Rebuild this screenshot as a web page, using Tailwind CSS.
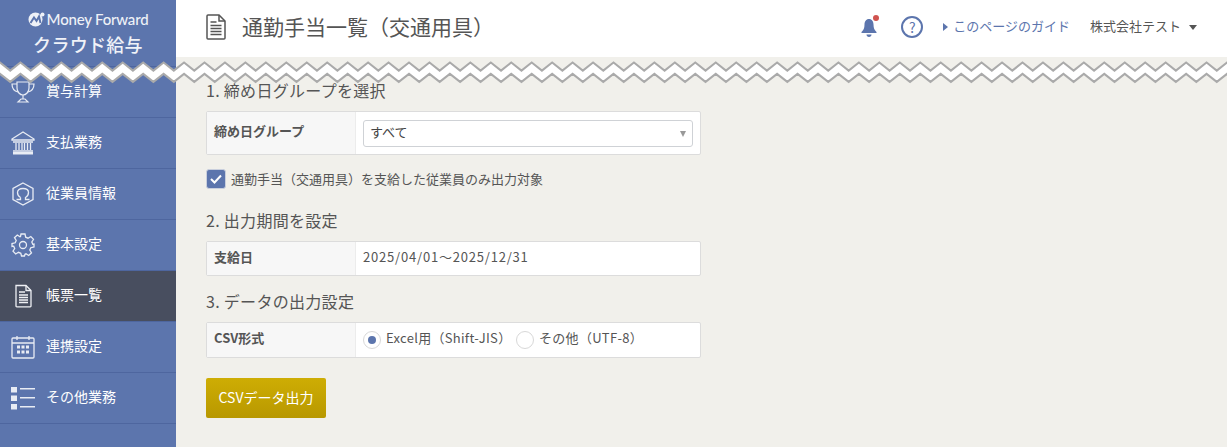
<!DOCTYPE html>
<html lang="ja"><head><meta charset="utf-8">
<script src="https://cdn.jsdelivr.net/npm/@tailwindcss/browser@4"></script>
</head>
<body class="m-0 w-[1227px] h-[447px] overflow-hidden bg-[#f1f0eb] font-['Noto_Sans_CJK_JP','Noto_Sans',sans-serif] text-[#555]">
<div class="relative flex h-[447px]">
  <aside class="w-[176px] shrink-0 bg-[#5c75ad] text-white flex flex-col">
    <div class="h-[67px] flex flex-col items-center pt-[10px] border-b border-[#4e669f]">
      <div class="flex items-center gap-[2px] h-[18px] text-[14px] leading-[18px] font-medium text-[#eef1f7]">
        <svg width="17" height="15" viewBox="0 0 17 15"><circle cx="7.500" cy="7.500" r="7" fill="#eef1f7"/><path d="M2.500 11 L6 5.500 L8.500 9 L11 4.500 L12.500 11" fill="none" stroke="#5c75ad" stroke-width="2"/><circle cx="14.500" cy="2.500" r="2" fill="#eef1f7"/></svg>
        <span class="font-['Lato','Noto_Sans',sans-serif] text-[15px] tracking-[-0.2px] whitespace-nowrap">Money Forward</span>
      </div>
      <div class="mt-[3px] text-[18px] leading-[26px] font-medium text-[#f0f2f8] tracking-[0.3px]">クラウド給与</div>
    </div>
    <nav class="flex flex-col text-[14px] leading-[20px]">
      <a class="h-[51px] flex items-center gap-[11px] pl-[11px] border-b border-[#4e669f]">
        <svg class="w-[24px] h-[24px] shrink-0" viewBox="0 0 24 24" fill="none" stroke="#e8ecf4" stroke-width="1.200"><path d="M6 2h12v6c0 4-3 7-6 7s-6-3-6-7z"/><path d="M6 4H1c0 5 2 7 6 8M18 4h5c0 5-2 7-6 8"/><path d="M12 15v4M7 22l3-3h4l3 3z"/></svg>
        <span class="pb-[5px]">賞与計算</span>
      </a>
      <a class="h-[51px] flex items-center gap-[11px] pl-[11px] border-b border-[#4e669f]">
        <svg class="w-[24px] h-[24px] shrink-0" viewBox="0 0 24 24" fill="none" stroke="#e8ecf4" stroke-width="1.300"><path d="M1 8 12 1l11 7v1H1z"/><path d="M2 11h20M5 12v7M8 12v7M11 12v7M13.500 12v7M16.500 12v7M19.500 12v7M2 20h20"/><rect x="2" y="21" width="20" height="2.500" fill="#e8ecf4" stroke="none"/></svg>
        <span class="pb-[5px]">支払業務</span>
      </a>
      <a class="h-[51px] flex items-center gap-[11px] pl-[11px] border-b border-[#4e669f]">
        <svg class="w-[24px] h-[24px] shrink-0" viewBox="0 0 24 24" fill="none" stroke="#e8ecf4" stroke-width="1.300"><path d="M12 1l10 5.500v11L12 23 2 17.500v-11z"/><path d="M9.500 15.500c-2-1-3-3-3-5C6.500 8 8.500 6.500 12 6.500s5.500 1.500 5.500 4c0 2-1 4-3 5v2h4M9.500 15.500v2h-4"/></svg>
        <span class="pb-[5px]">従業員情報</span>
      </a>
      <a class="h-[51px] flex items-center gap-[11px] pl-[11px] border-b border-[#4e669f]">
        <svg class="w-[24px] h-[24px] shrink-0" viewBox="0 0 24 24" fill="none" stroke="#e8ecf4" stroke-width="1.300"><circle cx="12" cy="12" r="3.500"/><path d="M10 1h4l.7 3.200 2.300 1 2.800-1.700 2.700 2.800-1.700 2.700 1 2.300L23 11v3l-3.200.7-1 2.300 1.700 2.800-2.800 2.700-2.700-1.700-1 .5L13.500 23h-3l-.7-2.700-2.300-1-2.800 1.700-2.700-2.800 1.700-2.700-1-2.300L1 13.500v-3l3.200-.7 1-2.300L3.500 4.700l2.800-2.700L9 3.700l.5-.2z"/></svg>
        <span class="pb-[5px]">基本設定</span>
      </a>
      <a class="h-[51px] flex items-center gap-[11px] pl-[11px] bg-[#484e5f] border-b border-[#4e669f]">
        <svg class="w-[24px] h-[24px] shrink-0" viewBox="0 0 24 24" fill="none" stroke="#eef0f4" stroke-width="1.300"><path d="M5 1.500h10l5 5V22a.8.8 0 0 1-.8.8H5.800A.8.8 0 0 1 5 22z"/><path d="M15 1.500v5h5"/><path d="M8 8h6M8 11h9M8 13.500h9M8 16h9M8 18.500h9" stroke-width="1.400"/></svg>
        <span class="pb-[5px]">帳票一覧</span>
      </a>
      <a class="h-[51px] flex items-center gap-[11px] pl-[11px] border-b border-[#4e669f]">
        <svg class="w-[24px] h-[24px] shrink-0" viewBox="0 0 24 24" fill="none" stroke="#e8ecf4" stroke-width="1.300"><rect x="1" y="3" width="22" height="20" rx="1"/><path d="M1 8h22M6 1v4M18 1v4"/><g fill="#e8ecf4" stroke="none"><rect x="6" y="10.500" width="3" height="3"/><rect x="10.500" y="10.500" width="3" height="3"/><rect x="15" y="10.500" width="3" height="3"/><rect x="6" y="15.500" width="3" height="3"/><rect x="10.500" y="15.500" width="3" height="3"/><rect x="15" y="15.500" width="3" height="3"/></g></svg>
        <span class="pb-[5px]">連携設定</span>
      </a>
      <a class="h-[51px] flex items-center gap-[11px] pl-[11px] border-b border-[#4e669f]">
        <svg class="w-[24px] h-[24px] shrink-0" viewBox="0 0 24 24" fill="#e8ecf4"><rect x="0" y="1" width="6" height="5.500"/><rect x="0" y="9.500" width="6" height="5.500"/><rect x="0" y="18" width="6" height="5.500"/><rect x="9" y="2" width="15" height="1.500"/><rect x="9" y="11" width="15" height="1.500"/><rect x="9" y="20" width="15" height="1.500"/></svg>
        <span class="pb-[5px]">その他業務</span>
      </a>
    </nav>
  </aside>
  <div class="flex-1 flex flex-col min-w-0">
    <header class="h-[57px] bg-white flex items-center pl-[30px] pr-[30px] pb-[3px] shrink-0">
      <svg class="w-[20px] h-[26px]" viewBox="0 0 20 26" fill="none" stroke="#555" stroke-width="1.500"><path d="M2 1h11l6 6v17a1 1 0 0 1-1 1H2a1 1 0 0 1-1-1V2a1 1 0 0 1 1-1z"/><path d="M13 1v6h6"/><path d="M4.500 8h6M4.500 11.500h11M4.500 14.500h11M4.500 17.500h11M4.500 20.500h11" stroke-width="1.300"/></svg>
      <h1 class="ml-[16px] pb-[3px] text-[21px] leading-[28px] font-normal text-[#555]">通勤手当一覧（交通用具）</h1>
      <div class="ml-auto flex items-center text-[13px]">
        <span class="relative w-[18px] h-[22px] block">
          <svg class="w-[18px] h-[20px] mt-[1px]" viewBox="0 0 18 20" fill="#5c75ad"><path d="M9 2c3 0 4.500 2.500 4.500 5.500 0 4 1 5.500 3 7.500v1H1.500v-1c2-2 3-3.500 3-7.500C4.500 4.500 6 2 9 2z"/><path d="M6.500 17.500h5c0 1.500-1 2.500-2.500 2.500s-2.500-1-2.500-2.500z"/></svg>
          <span class="absolute -top-[1px] -right-[1px] w-[6px] h-[6px] rounded-full bg-[#d0534f]"></span>
        </span>
        <span class="ml-[23px] w-[22px] h-[22px] rounded-full border-2 border-[#5c75ad] text-[#5c75ad] flex items-center justify-center text-[14px] leading-none">?</span>
        <span class="ml-[20px] w-0 h-0 border-y-[4px] border-y-transparent border-l-[5px] border-l-[#5c75ad]"></span>
        <a class="ml-[5px] pb-[2px] text-[#5c75ad] leading-[20px]">このページのガイド</a>
        <span class="ml-[20px] pb-[2px] leading-[20px]">株式会社テスト</span>
        <span class="ml-[8px] w-0 h-0 border-x-[4px] border-x-transparent border-t-[5px] border-t-[#555]"></span>
      </div>
    </header>
    <main class="pl-[30px] pt-[23px] w-[525px]">
      <h2 class="text-[16px] leading-[20px] font-normal tracking-[0.3px]">1. 締め日グループを選択</h2>
      <div class="mt-[11px] flex h-[44px] bg-white border border-[#dcdcdc] rounded-[2px]">
        <div class="w-[149px] bg-[#f7f7f7] border-r border-[#ececec] pl-[7px] flex items-center text-[13px] font-bold"><span class="pb-[4px]">締め日グループ</span></div>
        <div class="flex-1 px-[7px] flex items-center">
          <div class="relative w-full h-[27px] border border-[#cfd2d6] rounded-[3px] flex items-center pl-[6px] text-[13px] text-[#444]"><span class="pb-[2px]">すべて</span>
            <span class="absolute right-[6px] top-[10px] w-0 h-0 border-x-[3.500px] border-x-transparent border-t-[6px] border-t-[#999]"></span>
          </div>
        </div>
      </div>
      <label class="mt-[14px] flex items-center text-[13px] leading-[20px]">
        <span class="w-[20px] h-[20px] rounded-[3px] bg-[#5c75ad] border border-[#c9cfdd] flex items-center justify-center">
          <svg width="12" height="10" viewBox="0 0 12 10" fill="none" stroke="#fff" stroke-width="2"><path d="M1 5l3.500 3.500L11 1.500"/></svg>
        </span>
        <span class="ml-[5px]">通勤手当（交通用具）を支給した従業員のみ出力対象</span>
      </label>
      <h2 class="mt-[21px] text-[16px] leading-[20px] font-normal tracking-[0.3px]">2. 出力期間を設定</h2>
      <div class="mt-[11px] flex h-[35px] bg-white border border-[#dcdcdc] rounded-[2px] text-[13px]">
        <div class="w-[149px] bg-[#f7f7f7] border-r border-[#ececec] pl-[7px] flex items-center font-bold"><span class="pb-[4px]">支給日</span></div>
        <div class="flex-1 px-[7px] flex items-center tracking-[0.8px]"><span class="pb-[4px]">2025/04/01～2025/12/31</span></div>
      </div>
      <h2 class="mt-[15px] text-[16px] leading-[20px] font-normal tracking-[0.3px]">3. データの出力設定</h2>
      <div class="mt-[11px] flex h-[36px] bg-white border border-[#dcdcdc] rounded-[2px] text-[13px]">
        <div class="w-[149px] bg-[#f7f7f7] border-r border-[#ececec] pl-[7px] flex items-center font-bold"><span class="pb-[4px]">CSV形式</span></div>
        <div class="flex-1 pl-[7px] flex items-center">
          <span class="w-[18px] h-[18px] rounded-full border border-[#d8d8d8] flex items-center justify-center"><span class="w-[8px] h-[8px] rounded-full bg-[#5c75ad]"></span></span>
          <span class="ml-[5px] pb-[4px] w-[130px] tracking-[0.3px] whitespace-nowrap">Excel用（Shift-JIS）</span>
          <span class="w-[18px] h-[18px] rounded-full border border-[#d8d8d8]"></span>
          <span class="ml-[5px] pb-[4px] tracking-[0.3px]">その他（UTF-8）</span>
        </div>
      </div>
      <button class="mt-[20px] w-[120px] h-[40px] rounded-[2px] bg-gradient-to-b from-[#cead04] to-[#b89800] text-white text-[14px] pb-[2px]">CSVデータ出力</button>
    </main>
  </div>
  <svg class="absolute left-0 top-0 pointer-events-none" width="1227" height="90" viewBox="0 0 1227 90">
    <path transform="translate(0 -5.750) scale(1 1.0833)" fill="#fff" stroke="#aaa" stroke-width="2" d="M-20.450 63
      l10.225 7.500 10.225-7.500 10.225 7.500 10.225-7.500 10.225 7.500 10.225-7.500 10.225 7.500 10.225-7.500 10.225 7.500 10.225-7.500 10.225 7.500 10.225-7.500 10.225 7.500 10.225-7.500 10.225 7.500 10.225-7.500 10.225 7.500 10.225-7.500 10.225 7.500 10.225-7.500
      l10.225 7.500 10.225-7.500 10.225 7.500 10.225-7.500 10.225 7.500 10.225-7.500 10.225 7.500 10.225-7.500 10.225 7.500 10.225-7.500 10.225 7.500 10.225-7.500 10.225 7.500 10.225-7.500 10.225 7.500 10.225-7.500 10.225 7.500 10.225-7.500 10.225 7.500 10.225-7.500
      l10.225 7.500 10.225-7.500 10.225 7.500 10.225-7.500 10.225 7.500 10.225-7.500 10.225 7.500 10.225-7.500 10.225 7.500 10.225-7.500 10.225 7.500 10.225-7.500 10.225 7.500 10.225-7.500 10.225 7.500 10.225-7.500 10.225 7.500 10.225-7.500 10.225 7.500 10.225-7.500
      l10.225 7.500 10.225-7.500 10.225 7.500 10.225-7.500 10.225 7.500 10.225-7.500 10.225 7.500 10.225-7.500 10.225 7.500 10.225-7.500 10.225 7.500 10.225-7.500 10.225 7.500 10.225-7.500 10.225 7.500 10.225-7.500 10.225 7.500 10.225-7.500 10.225 7.500 10.225-7.500
      l10.225 7.500 10.225-7.500 10.225 7.500 10.225-7.500 10.225 7.500 10.225-7.500 10.225 7.500 10.225-7.500 10.225 7.500 10.225-7.500 10.225 7.500 10.225-7.500 10.225 7.500 10.225-7.500 10.225 7.500 10.225-7.500 10.225 7.500 10.225-7.500 10.225 7.500 10.225-7.500
      l10.225 7.500 10.225-7.500 10.225 7.500 10.225-7.500 10.225 7.500 10.225-7.500 10.225 7.500 10.225-7.500 10.225 7.500 10.225-7.500 10.225 7.500 10.225-7.500 10.225 7.500 10.225-7.500 10.225 7.500 10.225-7.500 10.225 7.500 10.225-7.500 10.225 7.500 10.225-7.500
      l10.225 7.500 10.225-7.500 10.225 7.500 10.225-7.500
      v10.500
      l-10.225 7.500 -10.225-7.500 -10.225 7.500 -10.225-7.500 -10.225 7.500 -10.225-7.500 -10.225 7.500 -10.225-7.500 -10.225 7.500 -10.225-7.500 -10.225 7.500 -10.225-7.500 -10.225 7.500 -10.225-7.500 -10.225 7.500 -10.225-7.500 -10.225 7.500 -10.225-7.500 -10.225 7.500 -10.225-7.500
      l-10.225 7.500 -10.225-7.500 -10.225 7.500 -10.225-7.500 -10.225 7.500 -10.225-7.500 -10.225 7.500 -10.225-7.500 -10.225 7.500 -10.225-7.500 -10.225 7.500 -10.225-7.500 -10.225 7.500 -10.225-7.500 -10.225 7.500 -10.225-7.500 -10.225 7.500 -10.225-7.500 -10.225 7.500 -10.225-7.500
      l-10.225 7.500 -10.225-7.500 -10.225 7.500 -10.225-7.500 -10.225 7.500 -10.225-7.500 -10.225 7.500 -10.225-7.500 -10.225 7.500 -10.225-7.500 -10.225 7.500 -10.225-7.500 -10.225 7.500 -10.225-7.500 -10.225 7.500 -10.225-7.500 -10.225 7.500 -10.225-7.500 -10.225 7.500 -10.225-7.500
      l-10.225 7.500 -10.225-7.500 -10.225 7.500 -10.225-7.500 -10.225 7.500 -10.225-7.500 -10.225 7.500 -10.225-7.500 -10.225 7.500 -10.225-7.500 -10.225 7.500 -10.225-7.500 -10.225 7.500 -10.225-7.500 -10.225 7.500 -10.225-7.500 -10.225 7.500 -10.225-7.500 -10.225 7.500 -10.225-7.500
      l-10.225 7.500 -10.225-7.500 -10.225 7.500 -10.225-7.500 -10.225 7.500 -10.225-7.500 -10.225 7.500 -10.225-7.500 -10.225 7.500 -10.225-7.500 -10.225 7.500 -10.225-7.500 -10.225 7.500 -10.225-7.500 -10.225 7.500 -10.225-7.500 -10.225 7.500 -10.225-7.500 -10.225 7.500 -10.225-7.500
      l-10.225 7.500 -10.225-7.500 -10.225 7.500 -10.225-7.500 -10.225 7.500 -10.225-7.500 -10.225 7.500 -10.225-7.500 -10.225 7.500 -10.225-7.500 -10.225 7.500 -10.225-7.500 -10.225 7.500 -10.225-7.500 -10.225 7.500 -10.225-7.500 -10.225 7.500 -10.225-7.500 -10.225 7.500 -10.225-7.500
      l-10.225 7.500 -10.225-7.500 -10.225 7.500 -10.225-7.500 z" />
  </svg>
</div>
</body></html>
